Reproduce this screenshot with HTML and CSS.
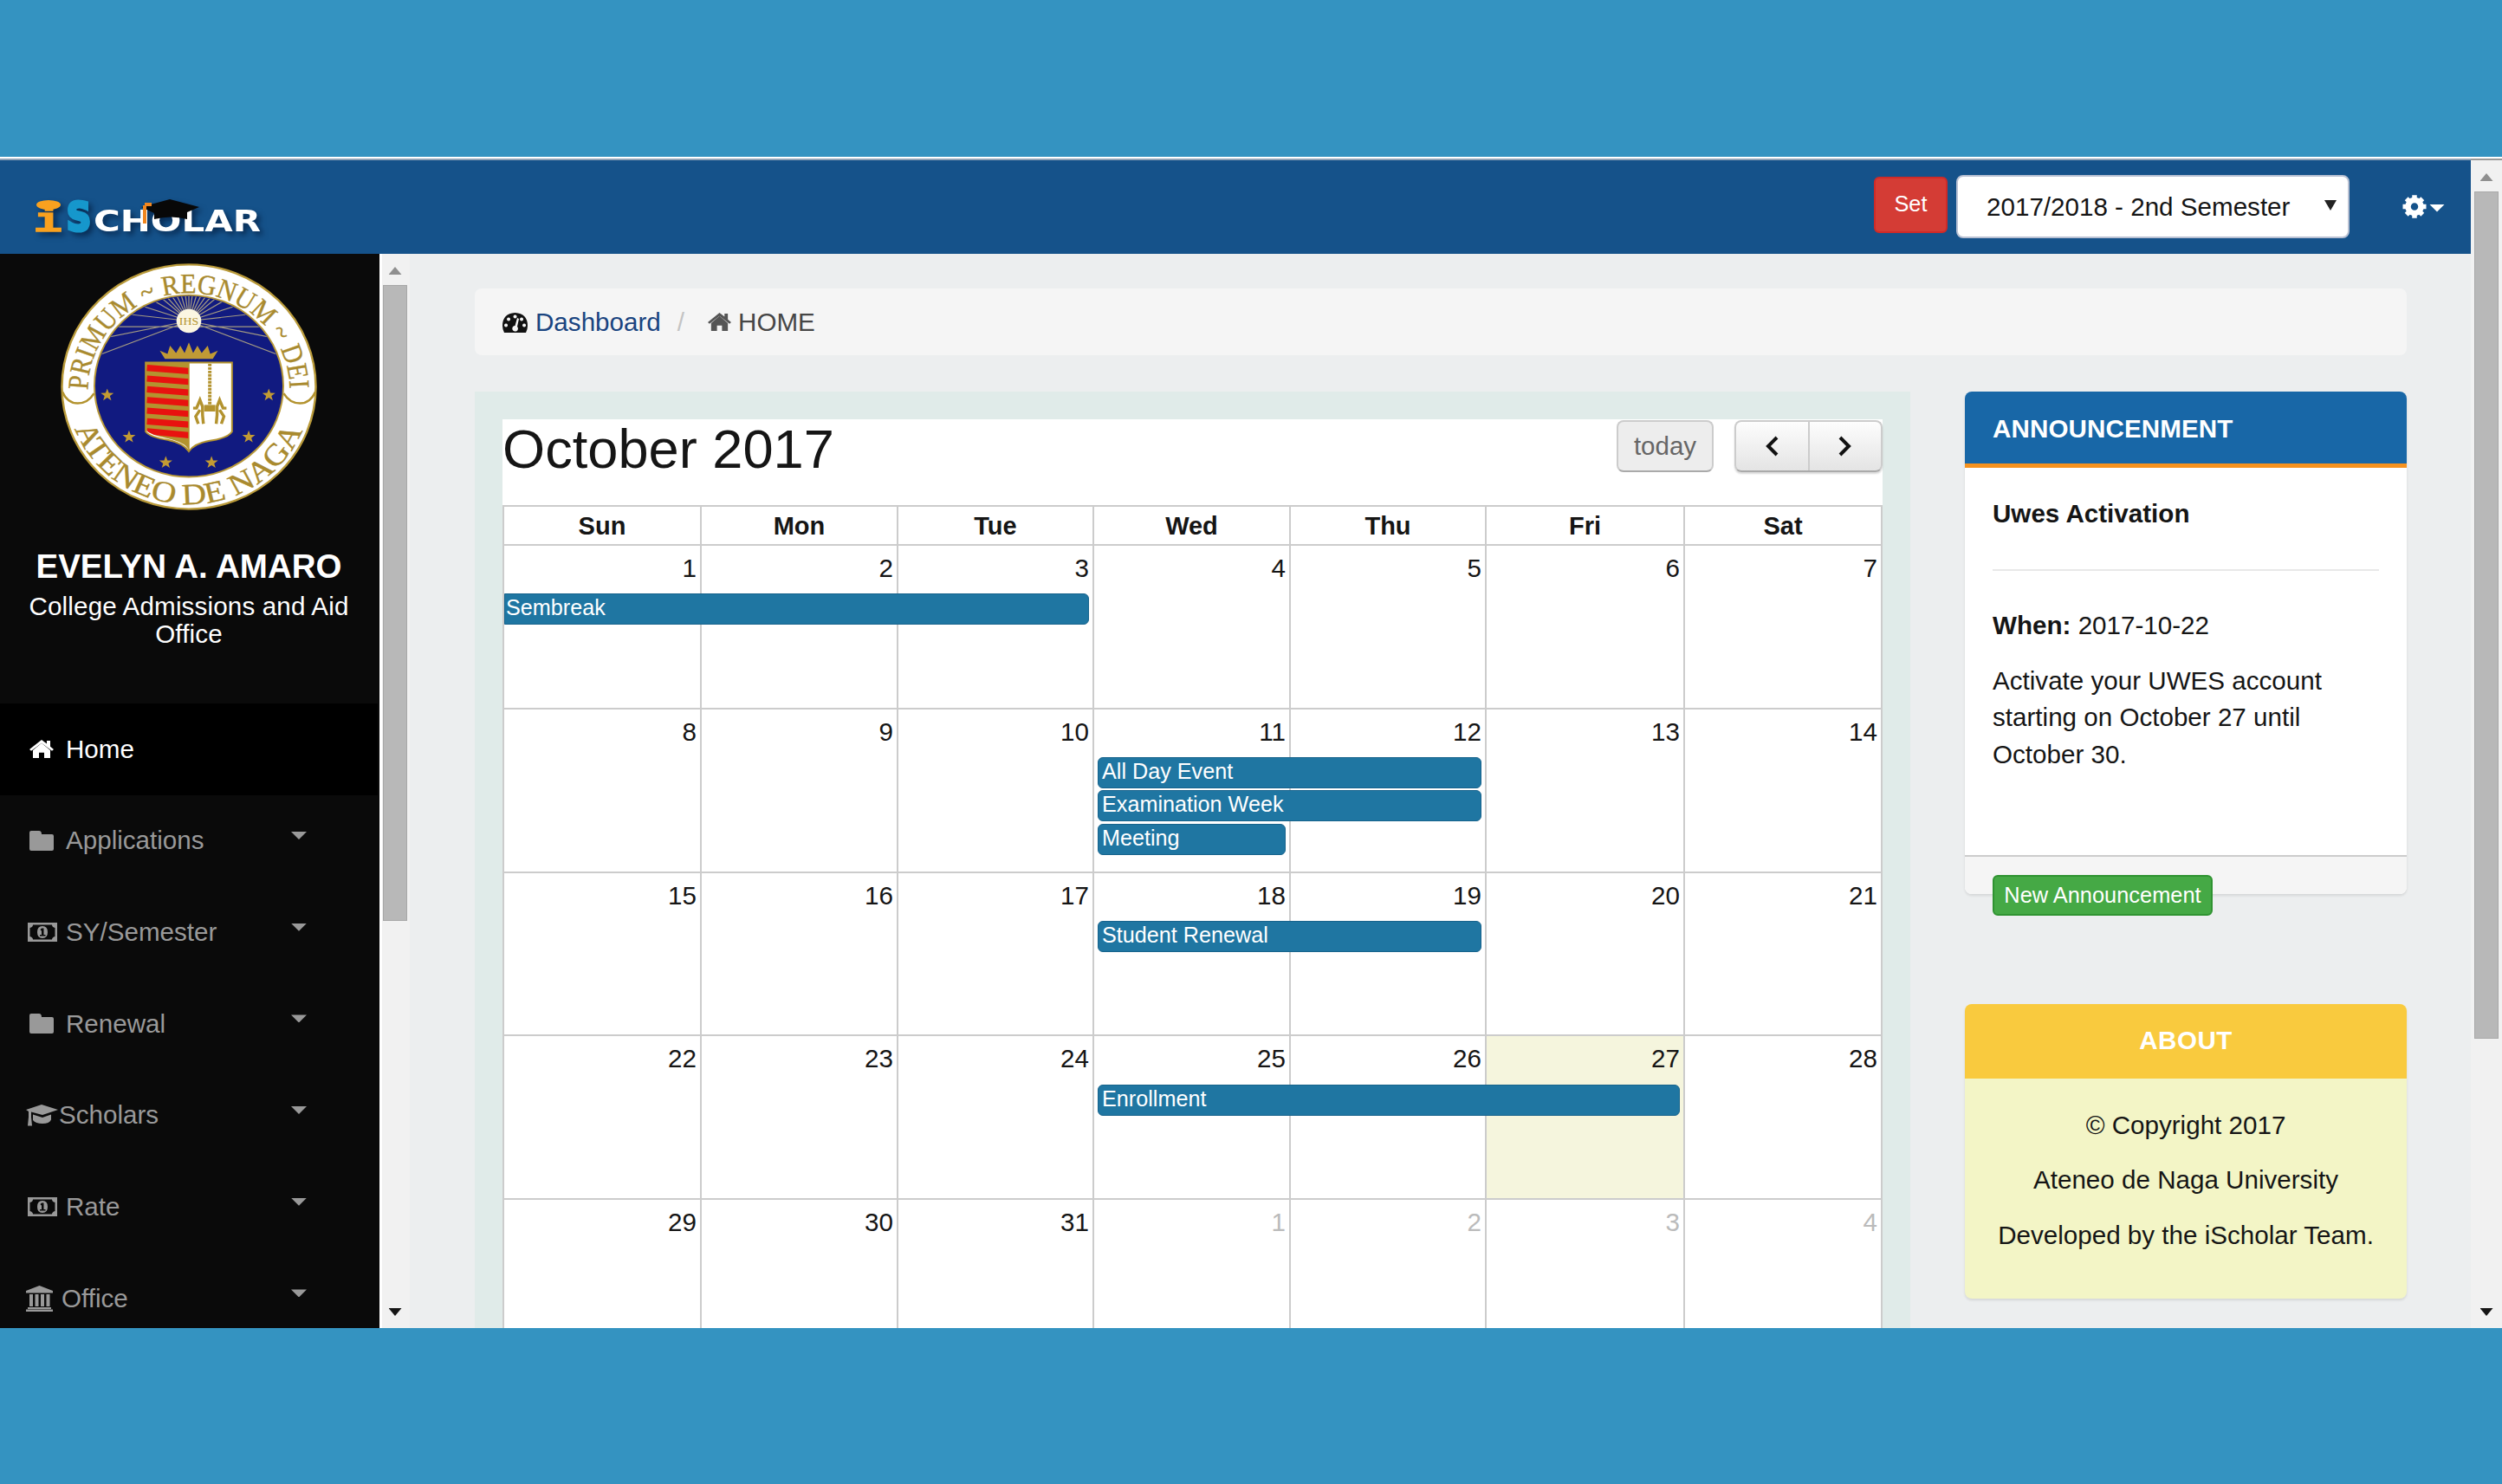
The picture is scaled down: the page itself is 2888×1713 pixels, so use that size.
FILE: index.html
```html
<!DOCTYPE html>
<html lang="en">
<head>
<meta charset="utf-8">
<title>iScholar</title>
<link rel="stylesheet" href="styles.css">
</head>
<body>
<svg class="defs" aria-hidden="true">
  <symbol id="house" viewBox="0 0 28 24" preserveAspectRatio="none"><path d="M14 4 4 13v10h7v-7h6v7h7V13z"/><path d="M14 0 0 12l2 2L14 4l12 10 2-2-4-3.500V1h-4v4z"/></symbol>
  <symbol id="folder" viewBox="0 0 28 23" preserveAspectRatio="none"><path d="M0 2q0-2 2-2h9q3 0 3 4h12q2 0 2 2v15q0 2-2 2H2q-2 0-2-2z"/></symbol>
  <symbol id="money" viewBox="0 0 34 22" preserveAspectRatio="none"><path fill-rule="evenodd" d="M0 0h34v22H0zM6 2.500Q6 5 2.500 6v10Q6 17 6 19.500h22q0-2.500 3.500-3.500V6Q28 5 28 2.500z"/><path fill-rule="evenodd" d="M17 4q6 0 6 7t-6 7-6-7 6-7zm-2.500 4 1 1.500.500-.500v5h-2v1.500h6.500V14h-2V6.500H16z"/></symbol>
  <symbol id="gradcap" viewBox="0 0 37 25" preserveAspectRatio="none"><path d="M18 0 37 6 19 12 6 8.500v6l1 10H2l1-10V8L0 6z"/><path d="M8 11.500 19 15l10-3.500v6Q27 22 19 22T8 18z"/></symbol>
  <symbol id="bank" viewBox="0 0 31 30" preserveAspectRatio="none"><path d="M15.500 0 31 6v2.500H0V6zM4 10h4v14H4zm6.500 0h4v14h-4zm6.500 0h4v14h-4zm6.500 0h4v14h-4zM2 25h27v2H2zm-2 2.500h31V30H0z"/></symbol>
  <symbol id="gauge" viewBox="0 0 29 23" preserveAspectRatio="none"><path fill-rule="evenodd" d="M14.500 0Q29 1 29 15q0 4-2 8H2q-2-4-2-8Q0 1 14.500 0zM14.500 2.500a2 2 0 1 0 .1 0zM7 5.500a2 2 0 1 0 .1 0zM22 5.500a2 2 0 1 0 .1 0zM4 12.500a2 2 0 1 0 .1 0zM25 12.500a2 2 0 1 0 .1 0zM17 6l-2.500 9a3.300 3.300 0 1 0 2.500 1L19 7z"/></symbol>
  <symbol id="star" viewBox="-10 -10 20 20"><path d="M0-10 2.400-3.200 9.500-3.100 3.900 1.300 5.900 8.100 0 4-5.900 8.100-3.900 1.300-9.500-3.100-2.400-3.200z"/></symbol>
</svg>

<div class="window">
  <header class="navbar">
    <svg class="logo" viewBox="0 0 276 60">
      <text class="logo-i" x="3" y="45" textLength="33" lengthAdjust="spacingAndGlyphs">i</text>
      <ellipse cx="20" cy="14.500" rx="14" ry="5.500" fill="#f9a11f"/>
      <text class="logo-s" x="41" y="43.500" textLength="28" lengthAdjust="spacingAndGlyphs">S</text>
      <text class="logo-rest" x="72" y="45" textLength="193" lengthAdjust="spacingAndGlyphs">CHOLAR</text>
      <path d="M127 17 160 8l34 9-14 6v8q-19-5-38 0v-7z" fill="#080808"/>
      <path d="M131 14h8M131 15v21" stroke="#f0861f" stroke-width="4" fill="none"/>
    </svg>
    <div class="tools">
      <button class="set">Set</button>
      <div class="select"><span>2017/2018 - 2nd Semester</span><i class="tri dark"></i></div>
      <div class="gear">
        <svg width="28" height="27" viewBox="-14 -13.500 28 27"><circle r="7.500" fill="none" stroke="#fff" stroke-width="6.500"/><g stroke="#fff" stroke-width="5.500"><path d="M0-13.200V-8M0 13.200V8M-13.500 0H-8M13.500 0H8M-9.300-9.300-6-6M9.300 9.300 6 6M9.300-9.300 6-6M-9.300 9.300-6 6"/></g></svg>
        <i class="tri white"></i>
      </div>
    </div>
  </header>

  <div class="below">
    <aside class="sidebar">
      <div class="profile">
        <svg class="seal" viewBox="0 0 300 300" preserveAspectRatio="none">
          <defs>
            <path id="arc-top" d="M32 154A118 118 0 0 1 268 154"/>
            <path id="arc-bottom" d="M16.500 201A143 143 0 0 0 283.500 201"/>
            <clipPath id="disc"><circle cx="150" cy="149" r="109"/></clipPath>
            <clipPath id="shield"><path d="M100 121h50v105q-6-9-24-13-20-4-26-10z"/></clipPath>
          </defs>
          <circle cx="150" cy="150" r="148.500" fill="#fff" stroke="#b99a3a" stroke-width="2.500"/>
          <circle cx="150" cy="149" r="110.500" fill="#111a80" stroke="#b99a3a" stroke-width="2"/>
          <g clip-path="url(#disc)" stroke="#a39a82" stroke-width="1.300">
            <path d="M150 70 20 121M150 70 20 97M150 77H20M150 70 20 55M150 70 30 30M150 70 50 10M150 70 70 0M150 70 88 0M150 70 104 0M150 70 118 0M150 70 130 0M150 70 141 0M150 70V0M150 70 159 0M150 70 170 0M150 70 182 0M150 70 196 0M150 70 212 0M150 70 230 0M150 70 250 10M150 70 270 30M150 70 280 55M150 77H280M150 70 280 97M150 70 280 121"/>
          </g>
          <circle cx="150" cy="70" r="14.500" fill="#fbf6e2"/>
          <text class="ihs" x="150" y="75" text-anchor="middle">IHS</text>
          <path d="M122 116 116 106l9 4 3-10 7 9 5-9 5 9 5-13 5 13 5-9 5 9 7-9 3 10 9-4-6 10z" fill="#c09a35"/>
          <path d="M99.500 120.500h101v84q-5 8-26 11-18 3-24.500 13-6-10-25-14-20-3-25.500-10z" fill="#fff" stroke="#b3932f" stroke-width="2"/>
          <g clip-path="url(#shield)">
            <path d="M99 120h52v110H99z" fill="#b3932f"/>
            <path d="M101 127l50 4M101 140l50 4M101 153l50 4M101 166l50 4M101 179l50 4M101 192l50 4M101 204l50 5" stroke="#e8120f" stroke-width="7.500"/>
          </g>
          <path d="M150 121v106" stroke="#b3932f" stroke-width="1.500"/>
          <path d="M174.500 122v50" stroke="#b3932f" stroke-width="4" stroke-dasharray="3 1.200"/>
          <path d="M168 172h13v8h-13z" fill="#b3932f"/>
          <path d="M155 176h4l4-10 3 8v10l1 11M163 178l-5 8 3 9M194 176h-4l-4-10-3 8v10l-1 11M186 178l5 8-3 9" fill="none" stroke="#b3932f" stroke-width="3.500"/>
          <g fill="#c39b33">
            <use href="#star" x="46.500" y="152" width="16" height="16"/><use href="#star" x="72" y="203" width="16" height="16"/>
            <use href="#star" x="115" y="234" width="16" height="16"/><use href="#star" x="168.500" y="234" width="16" height="16"/>
            <use href="#star" x="212" y="203" width="16" height="16"/><use href="#star" x="235.500" y="152" width="16" height="16"/>
          </g>
          <path d="M2 156q6 14 18 14t19-12M298 156q-6 14-18 14t-19-12" fill="none" stroke="#b3932f" stroke-width="2.500"/>
          <text class="motto top"><textPath href="#arc-top" textLength="369" lengthAdjust="spacingAndGlyphs">PRIMUM ~ REGNUM ~ DEI</textPath></text>
          <text class="motto"><textPath href="#arc-bottom" textLength="342" lengthAdjust="spacingAndGlyphs">ATENEO DE NAGA</textPath></text>
        </svg>
        <h2>EVELYN A. AMARO</h2>
        <p>College Admissions and Aid Office</p>
      </div>
      <nav class="menu">
        <a class="item active"><span class="ico"><svg width="28" height="22"><use href="#house"/></svg></span>Home</a>
        <a class="item"><span class="ico"><svg width="28" height="23"><use href="#folder"/></svg></span>Applications<i class="tri"></i></a>
        <a class="item"><span class="ico wide"><svg width="34" height="22"><use href="#money"/></svg></span>SY/Semester<i class="tri"></i></a>
        <a class="item"><span class="ico"><svg width="28" height="23"><use href="#folder"/></svg></span>Renewal<i class="tri"></i></a>
        <a class="item"><span class="ico cap"><svg width="37" height="25"><use href="#gradcap"/></svg></span>Scholars<i class="tri"></i></a>
        <a class="item"><span class="ico wide"><svg width="34" height="22"><use href="#money"/></svg></span>Rate<i class="tri"></i></a>
        <a class="item"><span class="ico office"><svg width="31" height="30"><use href="#bank"/></svg></span>Office<i class="tri"></i></a>
      </nav>
    </aside>
    <div class="scroll inner"><i class="up"></i><b class="thumb"></b><i class="down"></i></div>

    <main class="main">
      <div class="breadcrumb">
        <svg class="gauge" width="29" height="23"><use href="#gauge"/></svg>
        <a>Dashboard</a><span class="slash">/</span>
        <svg class="house" width="27" height="22"><use href="#house"/></svg>
        <span>HOME</span>
      </div>
      <div class="columns">
        <section class="cal-wrap">
          <div class="calendar">
            <div class="cal-head">
              <h1>October 2017</h1>
              <button class="today-btn">today</button>
              <div class="pager">
                <button><svg width="17" height="24" viewBox="0 0 17 24"><path d="M14 2 4 12l10 10"/></svg></button>
                <button><svg width="17" height="24" viewBox="0 0 17 24"><path d="M3 2 13 12 3 22"/></svg></button>
              </div>
            </div>
            <div class="days"><b>Sun</b><b>Mon</b><b>Tue</b><b>Wed</b><b>Thu</b><b>Fri</b><b>Sat</b></div>
            <div class="week">
              <span>1</span><span>2</span><span>3</span><span>4</span><span>5</span><span>6</span><span>7</span>
              <em class="ev from-sun">Sembreak</em>
            </div>
            <div class="week">
              <span>8</span><span>9</span><span>10</span><span>11</span><span>12</span><span>13</span><span>14</span>
              <em class="ev two">All Day Event</em><em class="ev two second">Examination Week</em><em class="ev one third">Meeting</em>
            </div>
            <div class="week">
              <span>15</span><span>16</span><span>17</span><span>18</span><span>19</span><span>20</span><span>21</span>
              <em class="ev two">Student Renewal</em>
            </div>
            <div class="week">
              <span>22</span><span>23</span><span>24</span><span>25</span><span>26</span><span class="now">27</span><span>28</span>
              <em class="ev three">Enrollment</em>
            </div>
            <div class="week">
              <span>29</span><span>30</span><span>31</span><span class="off">1</span><span class="off">2</span><span class="off">3</span><span class="off">4</span>
            </div>
          </div>
        </section>
        <div class="side">
          <section class="card news">
            <h3>ANNOUNCENMENT</h3>
            <div class="news-body">
              <h4>Uwes Activation</h4>
              <hr>
              <p><b>When:</b> 2017-10-22</p>
              <p>Activate your UWES account starting on October 27 until October 30.</p>
            </div>
            <footer><button>New Announcement</button></footer>
          </section>
          <section class="card about">
            <h3>ABOUT</h3>
            <div class="about-body"><p>© Copyright 2017</p><p>Ateneo de Naga University</p><p>Developed by the iScholar Team.</p></div>
          </section>
        </div>
      </div>
    </main>
  </div>
  <div class="scroll outer"><i class="up"></i><b class="thumb"></b><i class="down"></i></div>
</div>
</body>
</html>
```
FILE: styles.css
```css
* { box-sizing: border-box; }
body { margin: 0; padding-top: 181px; height: 1713px; overflow: hidden; background: #3493c1; font: 29.6px/42.3px "Liberation Sans", Arial, sans-serif; color: #151515; }
h1, h2, h3, h4, p { margin: 0; font-size: inherit; }
button { font-family: inherit; margin: 0; padding: 0; }
svg { display: block; flex: none; }
.defs { position: absolute; width: 0; height: 0; }

.window { display: grid; grid-template: 110px 1fr / 2852px 36px; height: 1352px; border-top: 2px solid #fff; background: #eceeef; overflow: hidden; }
.navbar { display: flex; justify-content: space-between; background: #15528a; border-top: 2px solid #8fa3b8; padding-left: 36px; }
.logo { width: 276px; height: 60px; margin-top: 37px; filter: drop-shadow(4px 4px 3px rgba(0, 20, 50, .6)); }
.logo text { font-weight: bold; font-family: "DejaVu Sans", sans-serif; }
.logo .logo-i { font-family: "Liberation Mono", monospace; font-size: 38px; fill: #f9a11f; stroke: #f9a11f; stroke-width: 1.5px; }
.logo .logo-s { font-size: 44px; fill: #1697cc; stroke: #1697cc; stroke-width: 4px; }
.logo .logo-rest { font-size: 33px; fill: #fff; }
.tools { display: flex; align-items: flex-start; }
.set { width: 85px; height: 65px; margin: 19px 10px 0 0; border: 2px solid #cf2a27; border-radius: 6px; background: #d43c35; color: #fff; font-size: 25.300px; padding-bottom: 2px; }
.select { display: flex; align-items: center; justify-content: space-between; width: 454px; height: 73px; margin-top: 17px; padding: 1px 13px 0 33px; border: 2px solid #b9c1d3; border-radius: 8px; background: #fff; }
.gear { display: flex; align-items: center; gap: 3px; margin: 40px 30px 0 61px; height: 27px; }
.tri { flex: none; width: 18px; height: 9px; background: #999; clip-path: polygon(0 0, 100% 0, 50% 100%); }
.tri.dark { width: 14px; height: 12px; background: #222; margin-bottom: 4px; }
.tri.white { background: #fff; margin-top: 3px; }

.below { display: flex; grid-row: 2; min-height: 0; }
.sidebar { width: 438px; background: #0a0a0a; color: #fff; overflow: hidden; flex: none; }
.profile { height: 519px; padding: 11px 18px 0 16px; display: flex; flex-direction: column; align-items: center; text-align: center; }
.seal { width: 296px; height: 285px; flex: none; }
.motto { font: 36px "Liberation Serif", serif; fill: #a98a2e; stroke: #a98a2e; stroke-width: .4px; }
.motto.top { font-size: 34px; }
.ihs { font: 14px "Liberation Serif", serif; fill: #b3932f; }
.profile h2 { margin-top: 43px; font-size: 38.500px; line-height: 44px; white-space: nowrap; }
.profile p { margin-top: 8px; line-height: 32px; letter-spacing: .15px; }
.item { display: flex; align-items: center; height: 105.700px; padding-left: 30px; color: #999; }
.item svg { fill: currentColor; }
.item.active { background: #000; color: #fff; width: 436px; }
.ico { width: 46px; padding-left: 4px; }
.ico.wide { padding-left: 2px; }
.ico.cap { width: 38px; padding-left: 0; }
.ico.office { width: 41px; padding-left: 0; }
.item .tri { margin: 0 84px 12px auto; }

.scroll { display: flex; flex-direction: column; align-items: center; background: #f1f1f1; }
.scroll .up, .scroll .down { width: 15px; height: 9px; background: #8f8f8f; clip-path: polygon(50% 0, 100% 100%, 0 100%); }
.scroll .down { background: #151515; clip-path: polygon(0 0, 100% 0, 50% 100%); margin-top: auto; }
.thumb { width: 28px; background: #b8b8b8; border: 1px solid #a8a8a8; }
.inner { width: 35px; border-left: 3px solid #fff; padding: 15px 3px 14px 1px; flex: none; }
.inner .thumb { margin-top: 12px; height: 734px; }
.outer { grid-area: 1 / 2 / 3 / 3; border-top: 2px solid #999; padding: 15px 0 14px; }
.outer .thumb { margin-top: 12px; height: 978px; }

.main { flex: 1; padding: 40px 74px 0 75px; min-width: 0; }
.breadcrumb { display: flex; align-items: center; height: 77px; padding: 1px 0 0 32px; border-radius: 8px; background: #f5f5f5; color: #464646; }
.breadcrumb a { color: #1a4480; margin-left: 9px; }
.gauge { fill: #111; }
.slash { color: #c4c4c4; margin: 0 27px 0 19px; }
.house { fill: #555; margin-right: 8px; }
.columns { display: flex; justify-content: space-between; align-items: flex-start; margin-top: 42px; }
.cal-wrap { width: 1657px; height: 1100px; padding: 32px; background: #e0ebe9; }
.calendar { background: #fff; height: 1060px; }
.cal-head { display: flex; align-items: flex-start; height: 99px; }
h1 { flex: 1; font-weight: normal; font-size: 63.200px; line-height: 68px; }
.today-btn, .pager { height: 60px; margin-top: 1px; border: 2px solid #ccc; border-bottom-color: #aaa; border-radius: 8px; }
.today-btn { width: 112px; font-size: 29.500px; color: #666; background: #ededed; }
.pager { display: flex; width: 171px; margin-left: 24px; background: linear-gradient(#fdfdfd, #e4e4e4); box-shadow: 0 2px 2px rgba(0, 0, 0, .15); }
.pager button { flex: 1; display: flex; align-items: center; justify-content: center; border: 0; background: none; }
.pager button + button { border-left: 2px solid #ccc; }
.pager path { fill: none; stroke: #111; stroke-width: 4; }
.days, .week { display: grid; grid-template-columns: 228px 227px 226px 227px 226px 229px 1fr; border-left: 2px solid #ccc; }
.days { height: 45px; border-top: 2px solid #ccc; font-size: 29px; text-align: center; line-height: 44px; }
.days b, .week span { border-right: 2px solid #ccc; }
.week { height: 188.800px; border-top: 2px solid #ccc; grid-template-rows: 55.300px 38.300px 38.300px 38.300px 1fr; }
.week span { grid-row: 1 / 6; padding: 5px 4px 0 0; text-align: right; }
.week span:nth-of-type(1) { grid-column: 1; }
.week span:nth-of-type(2) { grid-column: 2; }
.week span:nth-of-type(3) { grid-column: 3; }
.week span:nth-of-type(4) { grid-column: 4; }
.week span:nth-of-type(5) { grid-column: 5; }
.week span:nth-of-type(6) { grid-column: 6; }
.week span:nth-of-type(7) { grid-column: 7; }
.week .off { color: #bbb; }
.week .now { background: #f5f5dd; }
.ev { z-index: 1; grid-row: 2; height: 36px; margin: 0 6px 0 4px; padding-left: 4px; border: 1px solid #17638c; border-radius: 6px; background: #1f76a2; color: #fff; font: 25.200px/31px "Liberation Sans", Arial, sans-serif; }
.from-sun { grid-column: 1 / 4; margin-left: 0; padding-left: 1px; border-radius: 0 6px 6px 0; }
.one { grid-column: 4 / 5; }
.two { grid-column: 4 / 6; }
.three { grid-column: 4 / 7; }
.second { grid-row: 3; }
.third { grid-row: 4; }

.side { width: 510px; }
.card { border-radius: 8px; box-shadow: 0 2px 3px rgba(0, 0, 0, .1); }
.card h3 { color: #fff; border-radius: 8px 8px 0 0; }
.news { height: 580px; background: #fff; }
.news h3 { height: 88px; padding-left: 32px; line-height: 85px; background: #1867a7; border-bottom: 5px solid #f6921e; letter-spacing: .1px; }
.news-body { height: 447px; padding: 32px; }
.news-body hr { margin: 43px 0 42px; border: 0; height: 2px; background: #e8e8e8; }
.news-body p { margin-bottom: 21.500px; }
.news footer { height: 45px; padding: 21px 32px 0; border-top: 2px solid #ccc; border-radius: 0 0 8px 8px; background: #f5f5f5; }
.news button { display: block; width: 254px; height: 47px; border: 2px solid #2f9331; border-radius: 6px; background: #45a945; color: #fff; font-size: 25.400px; white-space: nowrap; }
.about { margin-top: 127px; text-align: center; background: #f3f5c6; }
.about h3 { height: 86px; line-height: 84px; background: #f9ca3e; letter-spacing: .5px; }
.about-body { height: 254px; padding-top: 33px; }
.about-body p { margin-bottom: 21.200px; }
```
